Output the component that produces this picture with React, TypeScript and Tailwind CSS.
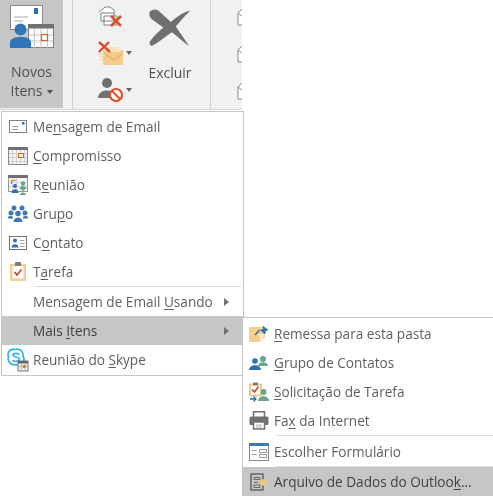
import React from "react";

const Ul = ({ children }: { children: React.ReactNode }) => (
  <span className="underline decoration-1 underline-offset-2">{children}</span>
);

const MailIcon = () => (
  <svg width="18" height="13" viewBox="0 0 18 13">
    <rect x="0.500" y="0.500" width="17" height="12" fill="#fff" stroke="#808080" />
    <rect x="13" y="2" width="2.500" height="2.500" fill="#2b6aa8" />
    <path d="M3 6.500h6M3 9.500h6" stroke="#9a9a9a" />
  </svg>
);

const CalendarIcon = () => (
  <svg width="20" height="18" viewBox="0 0 20 18">
    <rect x="0.500" y="0.500" width="19" height="17" fill="#f3f3f3" stroke="#8a8a8a" />
    <rect x="0" y="0" width="20" height="3" fill="#707070" />
    <path d="M4.500 3v14M8.500 3v14M12.500 3v14M16.500 3v14M1 6.500h18M1 10.500h18M1 14.500h18" stroke="#cfcfcf" />
    <rect x="10.500" y="6.500" width="5" height="4" fill="#fff" stroke="#d9661f" />
  </svg>
);

const MeetingIcon = () => (
  <svg width="20" height="20" viewBox="0 0 20 20">
    <rect x="0.500" y="0.500" width="19" height="16" fill="#f5f5f5" stroke="#999" />
    <rect x="0" y="0" width="20" height="3" fill="#707070" />
    <path d="M4.500 3v13M8.500 3v13M1 7.500h18M1 11.500h18" stroke="#d8d8d8" />
    <path d="M3.500 9V5.500h4" stroke="#d9661f" fill="none" />
    <circle cx="7" cy="11" r="2" fill="#2f6ea8" />
    <path d="M3.500 18c0-5 7-5 7 0z" fill="#2f6ea8" />
    <circle cx="15" cy="8.500" r="2.200" fill="#6aa58e" />
    <path d="M11.500 14c0-4 7-4 7 0z" fill="#6aa58e" />
    <circle cx="15" cy="14" r="1.800" fill="#6aa58e" />
    <path d="M12 20c0-3.500 6-3.500 6 0z" fill="#6aa58e" />
  </svg>
);

const GroupIcon = () => (
  <svg width="20" height="18" viewBox="0 0 20 18" fill="#4277b0">
    <circle cx="6" cy="3" r="2.500" />
    <circle cx="14" cy="3" r="2.500" />
    <circle cx="3" cy="8" r="2.500" />
    <circle cx="17" cy="8" r="2.500" />
    <circle cx="10" cy="8.500" r="2.800" />
    <path d="M0 12.500c0-2 5-2 5 0v1H0zM15 12.500c0-2 5-2 5 0v1h-5zM5.500 17c0-6 9-6 9 0z" />
  </svg>
);

const ContactIcon = () => (
  <svg width="18" height="14" viewBox="0 0 18 14">
    <rect x="0.500" y="0.500" width="17" height="13" fill="#fff" stroke="#707070" />
    <circle cx="6" cy="4.500" r="2" fill="#2f6ea8" />
    <path d="M2.500 11.500c0-4.500 7-4.500 7 0z" fill="#2f6ea8" />
    <path d="M11 4.500h4.500M11 7.500h4.500M11 10.500h4.500" stroke="#a5a5a5" />
  </svg>
);

const TaskIcon = () => (
  <svg width="16" height="19" viewBox="0 0 16 19">
    <rect x="0" y="2" width="16" height="17" fill="#f4cf94" />
    <rect x="2.500" y="4" width="11" height="12.500" fill="#fff" />
    <rect x="5" y="0" width="6" height="4" fill="#808080" />
    <path d="M4.500 10l2.500 3 4.500-5.500" stroke="#c8402a" strokeWidth="1.600" fill="none" />
  </svg>
);

const SkypeIcon = () => (
  <svg width="22" height="24" viewBox="0 0 22 24">
    <path d="M8 1.500a6 6 0 0 1 8 7 5.500 5.500 0 0 1-7 8 6 6 0 0 1-7.500-7.500A5.500 5.500 0 0 1 8 1.500z" fill="#fff" stroke="#3ab4e8" strokeWidth="1.800" />
    <path d="M12.500 6.500C11 4.800 6 4.800 6 7s6.500 1.800 6.500 4.200S7 14 5.500 12" fill="none" stroke="#3ab4e8" strokeWidth="1.800" />
    <rect x="11" y="13" width="10" height="10" fill="#f0f0f0" />
    <rect x="11" y="13" width="10" height="10" fill="none" stroke="#777" />
    <rect x="11" y="13" width="10" height="2.500" fill="#666" />
    <path d="M14.500 15v8M18 15v8M11 18.500h10" stroke="#b5b5b5" />
    <rect x="16" y="17" width="2.500" height="3" fill="#e0702a" />
  </svg>
);

const ShipIcon = () => (
  <svg width="20" height="18" viewBox="0 0 20 18">
    <path d="M0 2h16v10l-5 5H0z" fill="#f5cf8e" />
    <path d="M8 9h8l-5 8v-6z" fill="#fbeacb" />
    <path d="M6 10l4.500-5" stroke="#2f6ea8" strokeWidth="1.500" />
    <path d="M13.500 0.500l6 4.500-2.500 1-1 3.500-5-4.500 3-1z" fill="#2f76b8" />
  </svg>
);

const ContactGroupIcon = () => (
  <svg width="20" height="14" viewBox="0 0 20 14">
    <circle cx="14" cy="3" r="3" fill="#6aa58e" />
    <path d="M9 10c0-5 10-5 10 0z" fill="#6aa58e" />
    <circle cx="6" cy="5" r="2.800" fill="#2f6ea8" />
    <path d="M0 14c0-6.500 12-6.500 12 0z" fill="#2f6ea8" />
  </svg>
);

const TaskRequestIcon = () => (
  <svg width="20" height="20" viewBox="0 0 20 20">
    <rect x="1" y="2.500" width="11" height="11" fill="#fff" stroke="#eec583" strokeWidth="1.800" />
    <rect x="4" y="0.500" width="5" height="3" fill="#808080" />
    <path d="M3 7.500l2.500 2.500L9.500 4.500" stroke="#c8402a" strokeWidth="1.500" fill="none" />
    <circle cx="14.500" cy="10" r="3" fill="#6aa58e" />
    <path d="M9 19c0-6.500 11-6.500 11 0z" fill="#6aa58e" />
    <path d="M1 17h6M4.500 14.500L7 17l-2.500 2.500" stroke="#2f6ea8" strokeWidth="1.300" fill="none" />
  </svg>
);

const FaxIcon = () => (
  <svg width="20" height="19" viewBox="0 0 20 19">
    <rect x="4.500" y="0.750" width="11" height="6" fill="#fff" stroke="#707070" strokeWidth="1.500" />
    <rect x="0.500" y="5.500" width="19" height="8.500" rx="1.500" fill="#707070" />
    <rect x="4.500" y="11" width="11" height="7" fill="#fff" stroke="#707070" strokeWidth="1.500" />
    <path d="M7 14h6M7 16h6" stroke="#aaa" />
  </svg>
);

const FormIcon = () => (
  <svg width="20" height="18" viewBox="0 0 20 18">
    <rect x="0.500" y="0.500" width="19" height="17" fill="#fff" stroke="#8a8a8a" />
    <rect x="0" y="0" width="20" height="3" fill="#3b78b5" />
    <path d="M2.500 7.500h5M2.500 11.500h5M10.500 6.500h7v3h-7zM10.500 11.500h7v3h-7z" stroke="#9a9a9a" fill="none" />
  </svg>
);

const DataFileIcon = () => (
  <svg width="18" height="18" viewBox="0 0 18 18">
    <path d="M1 1h12v16H1z" fill="none" stroke="#666" strokeWidth="1.500" />
    <path d="M4 4.500h6v2H4zM4 12h6v2.500H4z" fill="none" stroke="#666" />
    <path d="M4 9.500h4" stroke="#666" />
    <path d="M7 9l7-3 3 1-2 6-5-1 1-2z" fill="#f0c77b" />
  </svg>
);

const Row = ({
  icon,
  children,
  arrow,
  active,
}: {
  icon?: React.ReactNode;
  children: React.ReactNode;
  arrow?: boolean;
  active?: boolean;
}) => (
  <div className={`flex h-[29px] items-center ${active ? "bg-[#c6c6c6] text-[#404040]" : "text-[#5f5f5f]"}`}>
    <div className="flex w-[31px] shrink-0 items-center justify-center">{icon}</div>
    <span className="flex-1 whitespace-nowrap pt-[2px]">{children}</span>
    {arrow && <div className="mr-[14px] h-0 w-0 border-y-[4.5px] border-l-[5px] border-y-transparent border-l-[#707070]" />}
  </div>
);

const Sep = ({ className }: { className: string }) => <div className={`h-px bg-[#dcdcdc] ${className}`} />;

const RibbonDivider = () => <div className="h-full w-px bg-[#cfcfcf]" />;

const ParcelStub = () => (
  <svg width="5" height="18" viewBox="0 0 5 18">
    <path d="M5 1L1 5v12h4M1 5l4 3" fill="#fff" stroke="#888" />
  </svg>
);

const Caret = () => <span className="h-0 w-0 border-x-[3.5px] border-t-[4px] border-x-transparent border-t-[#666]" />;

export default function App() {
  return (
    <div
      className="relative h-[496px] w-[493px] overflow-hidden bg-white text-[13.6px] blur-[0.35px]"
      style={{ fontFamily: '"Open Sans", sans-serif' }}
    >
      {/* ribbon */}
      <div className="flex h-[110px] w-[242px] border-b border-[#d4d4d4] bg-[#f1f1f1] text-[#505050]">
        <div className="flex h-[108px] w-[63px] shrink-0 flex-col items-center bg-[#c6c6c6]">
          <svg width="44" height="44" viewBox="0 0 44 44" className="mt-[5px] ml-[1px]">
            <rect x="0.500" y="0.500" width="32" height="24" fill="#fff" stroke="#8a8a8a" />
            <rect x="24" y="3" width="4" height="6" fill="#2f6ea8" />
            <path d="M4 12h14M4 16h9" stroke="#a5a5a5" />
            <rect x="18.500" y="19.500" width="25" height="23" fill="#fafafa" stroke="#808080" />
            <rect x="18" y="19" width="26" height="4.500" fill="#707070" />
            <path d="M24.500 24v19M31 24v19M37.500 24v19M19 30h24M19 36h24" stroke="#c5c5c5" />
            <rect x="31.500" y="29.500" width="6" height="6" fill="#fff" stroke="#d9661f" strokeWidth="1.200" />
            <circle cx="10.500" cy="24.500" r="6" fill="#2f76b8" />
            <path d="M0 43v-5c0-5 5-6 10.500-6S21 33 21 38v5z" fill="#2f76b8" />
          </svg>
          <div className="mt-[13px] text-center text-[14px] leading-[19px]">
            Novos
            <br />
            Itens
            <span className="ml-[4px] inline-block h-0 w-0 border-x-[3.5px] border-t-[4px] border-x-transparent border-t-[#505050] align-middle" />
          </div>
        </div>
        <div className="ml-[9px] flex h-full">
          <RibbonDivider />
        </div>
        <div className="flex w-[137px] shrink-0">
          <div className="flex w-[75px] shrink-0 flex-col items-start gap-[13px] pl-[25px] pt-[4px]">
            <svg width="26" height="24" viewBox="0 0 26 24">
              <path d="M1 8l6-5h5l4 3v3" fill="#fff" stroke="#808080" />
              <path d="M3 9h13v8H3zM6 12h13v9H6z" fill="#fff" stroke="#808080" />
              <path d="M13 12l10 10M23 12L13 22" stroke="#d9512c" strokeWidth="2.600" />
            </svg>
            <div className="flex items-center gap-[2px]">
              <svg width="26" height="24" viewBox="0 0 26 24">
                <path d="M5 9h20v15H5z" fill="#f3cd8c" />
                <path d="M9 6h13v5H9z" fill="#f9e3bb" />
                <path d="M6 12l10 7 9-7" fill="none" stroke="#e5b467" strokeWidth="1.500" />
                <path d="M1 1l11 10M11 1L1 11" stroke="#d9512c" strokeWidth="2.400" />
                <path d="M0 13h4M1 16h4M2 19h3" stroke="#f3cd8c" />
              </svg>
              <Caret />
            </div>
            <div className="flex items-center gap-[2px]">
              <svg width="26" height="24" viewBox="0 0 26 24">
                <circle cx="9" cy="5" r="5" fill="#707070" />
                <path d="M0 20c0-10 18-10 18 0z" fill="#707070" />
                <circle cx="18" cy="17" r="6" fill="#fff" stroke="#d9512c" strokeWidth="2.200" />
                <path d="M14 13l8 8" stroke="#d9512c" strokeWidth="2" />
              </svg>
              <Caret />
            </div>
          </div>
          <div className="flex w-[44px] shrink-0 flex-col items-center pt-[8px]">
            <svg width="44" height="39" viewBox="0 0 46 42" preserveAspectRatio="none">
              <path d="M2 4c3-3 6-3 9-1l13 12C30 10 37 4 44 3 38 9 33 15 29 20l14 21c-7-5-13-11-18-15C18 31 11 37 4 41c-2-1-3-3-2-5 4-6 9-10 14-15L4 12C1 9 1 6 2 4z" fill="#707070" />
            </svg>
            <div className="mt-[15px] whitespace-nowrap text-[14px]">Excluir</div>
          </div>
        </div>
        <div className="flex h-full">
          <RibbonDivider />
        </div>
        <div className="flex flex-1 flex-col items-end gap-[19px] pt-[8px]">
          <ParcelStub />
          <ParcelStub />
          <ParcelStub />
        </div>
      </div>

      {/* dropdown */}
      <div className="absolute left-px top-[111px] w-[243px] border border-[#c6c6c6] bg-white pb-px">
        <Row icon={<MailIcon />}>Me<Ul>n</Ul>sagem de Email</Row>
        <Row icon={<CalendarIcon />}><Ul>C</Ul>ompromisso</Row>
        <Row icon={<MeetingIcon />}>R<Ul>e</Ul>união</Row>
        <Row icon={<GroupIcon />}>Gru<Ul>p</Ul>o</Row>
        <Row icon={<ContactIcon />}>C<Ul>o</Ul>ntato</Row>
        <Row icon={<TaskIcon />}>T<Ul>a</Ul>refa</Row>
        <Sep className="ml-[33px] mr-[2px]" />
        <Row arrow>Mensagem de Email <Ul>U</Ul>sando</Row>
        <Row arrow active>Mais <Ul>I</Ul>tens</Row>
        <Row icon={<SkypeIcon />}>Reunião do <Ul>S</Ul>kype</Row>
      </div>

      {/* submenu */}
      <div className="absolute left-[242px] top-[317px] w-[252px] border-l border-t border-[#c6c6c6] bg-white pt-px">
        <Row icon={<ShipIcon />}><Ul>R</Ul>emessa para esta pasta</Row>
        <Row icon={<ContactGroupIcon />}><Ul>G</Ul>rupo de Contatos</Row>
        <Row icon={<TaskRequestIcon />}><Ul>S</Ul>olicitação de Tarefa</Row>
        <Row icon={<FaxIcon />}>Fa<Ul>x</Ul> da Internet</Row>
        <Sep className="ml-[33px] mb-px" />
        <Row icon={<FormIcon />}>Escolher Formulário</Row>
        <Sep className="ml-[33px]" />
        <Row icon={<DataFileIcon />} active>Arquivo de Dados do Outloo<Ul>k</Ul>...</Row>
      </div>
    </div>
  );
}
